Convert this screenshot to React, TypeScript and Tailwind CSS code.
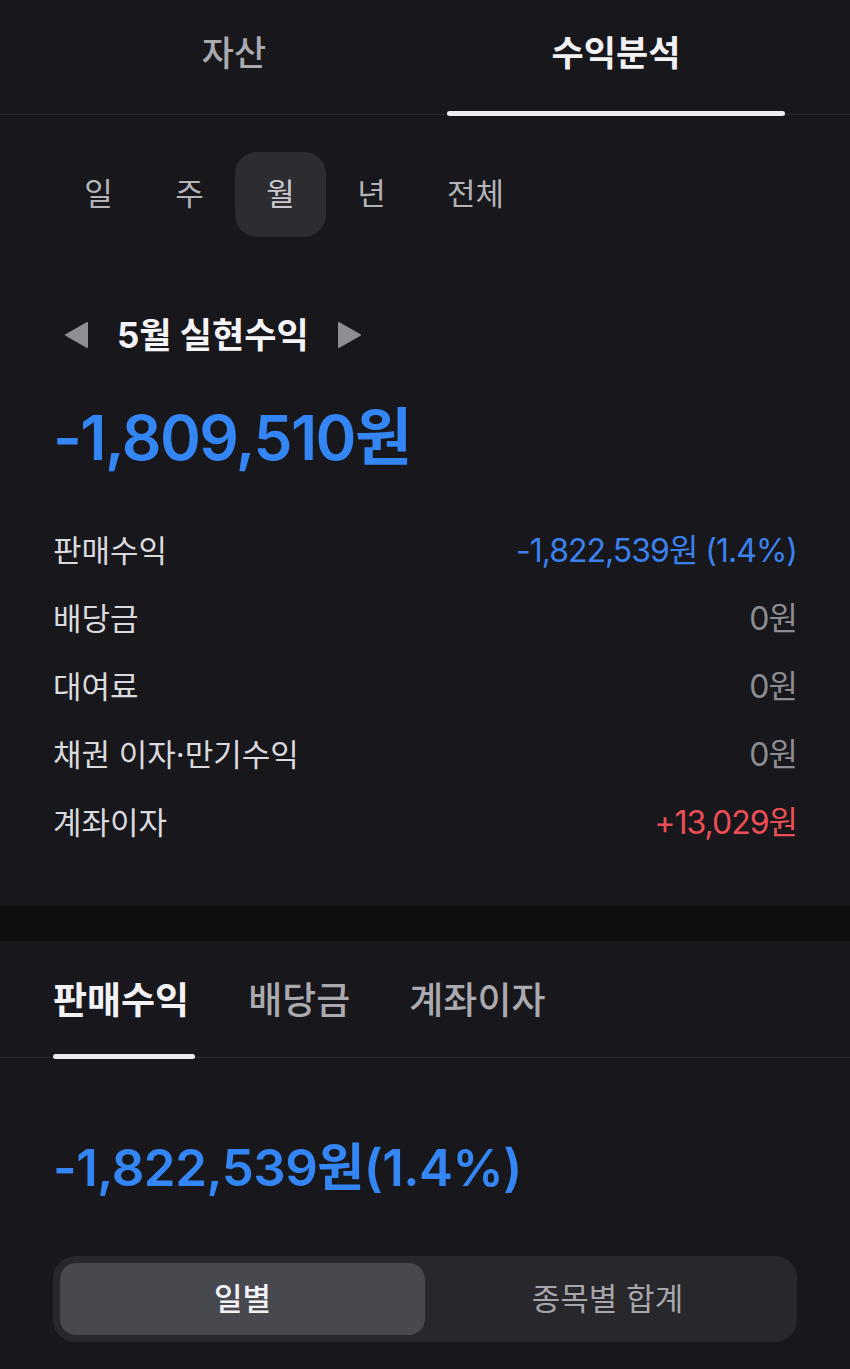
import React, { useState } from 'react';

const FONT = 'font-["Inter","Noto_Sans_CJK_KR",sans-serif]';

const rows = [
  { label: '판매수익', value: '-1,822,539원 (1.4%)', tone: 'text-[#3b82ee]' },
  { label: '배당금', value: '0원', tone: 'text-[#8c8c92]' },
  { label: '대여료', value: '0원', tone: 'text-[#8c8c92]' },
  { label: '채권 이자·만기수익', value: '0원', tone: 'text-[#8c8c92]' },
  { label: '계좌이자', value: '+13,029원', tone: 'text-[#ec4f55]' },
];

export default function App() {
  const [period, setPeriod] = useState('월');
  const [mode, setMode] = useState('일별');

  return (
    <div className={`min-h-screen w-[850px] bg-[#17171c] ${FONT}`}>
      {/* Top tabs */}
      <div className="flex gap-[46px] px-[66px] h-[115px] border-b border-[#2a2a2f]">
        {['자산', '수익분석'].map((t) => {
          const active = t === '수익분석';
          return (
            <div key={t} className="relative flex-1 flex justify-center pt-[29px]">
              <span
                className={`text-[35px] leading-[48px] ${
                  active ? 'font-bold text-[#f2f2f5]' : 'font-medium text-[#a9a9ae]'
                }`}
              >
                {t}
              </span>
              {active && (
                <div className="absolute left-[-1px] right-[-1px] bottom-[-2px] h-[5px] rounded-full bg-[#ececf0]" />
              )}
            </div>
          );
        })}
      </div>

      {/* Period selector */}
      <div className="flex px-[53px] mt-[37px]">
        {['일', '주', '월', '년', '전체'].map((p) => (
          <button
            key={p}
            onClick={() => setPeriod(p)}
            className={`h-[85px] min-w-[91px] px-[30px] rounded-[22px] text-[31px] ${
              period === p ? 'bg-[#2c2c31] text-[#c9c9ce]' : 'text-[#b3b3b8]'
            }`}
          >
            {p}
          </button>
        ))}
      </div>

      {/* Realized profit */}
      <div className="px-[53px]">
        <div className="flex items-center mt-[76px] h-[44px]">
          <svg width="26" height="28" viewBox="0 0 26 28" className="ml-[10px]">
            <path d="M24 2 L3 14 L24 26 Z" fill="#8e8e93" strokeLinejoin="round" stroke="#8e8e93" strokeWidth="2" />
          </svg>
          <span className="ml-[28px] text-[35px] font-bold text-[#f4f4f6]">5월 실현수익</span>
          <svg width="26" height="28" viewBox="0 0 26 28" className="ml-[28px]">
            <path d="M2 2 L23 14 L2 26 Z" fill="#8e8e93" strokeLinejoin="round" stroke="#8e8e93" strokeWidth="2" />
          </svg>
        </div>

        <div className="mt-[45px] text-[62px] leading-[72px] font-semibold text-[#3586f5] tracking-[-1.5px]">
          -1,809,510원
        </div>

        <div className="mt-[43px] pb-[49px]">
          {rows.map((r) => (
            <div key={r.label} className="flex items-center justify-between h-[68px]">
              <span className="text-[31px] text-[#dadade]">{r.label}</span>
              <span className={`text-[32px] tracking-[-1px] ${r.tone}`}>{r.value}</span>
            </div>
          ))}
        </div>
      </div>

      {/* Divider band */}
      <div className="h-[35px] bg-[#0f0f12]" />

      {/* Sub tabs */}
      <div className="flex gap-[59px] px-[53px] h-[117px] border-b border-[#2a2a2f]">
        {['판매수익', '배당금', '계좌이자'].map((t) => {
          const active = t === '판매수익';
          return (
            <div key={t} className="relative pt-[35px]">
              <span
                className={`text-[37px] leading-[50px] ${
                  active ? 'font-bold text-[#f2f2f5]' : 'font-medium text-[#a9a9ae]'
                }`}
              >
                {t}
              </span>
              {active && (
                <div className="absolute left-0 right-[-6px] bottom-[-2px] h-[5px] rounded-full bg-[#ececf0]" />
              )}
            </div>
          );
        })}
      </div>

      <div className="px-[53px]">
        <div className="mt-[80px] text-[51px] leading-[60px] font-semibold text-[#3586f5] tracking-[-0.5px]">
          -1,822,539원(1.4%)
        </div>

        <div className="mt-[58px] flex h-[86px] p-[7px] rounded-[22px] bg-[#27272c]">
          {['일별', '종목별 합계'].map((m) => (
            <button
              key={m}
              onClick={() => setMode(m)}
              className={`flex-1 rounded-[16px] text-[31px] ${
                mode === m ? 'bg-[#48484f] text-[#f2f2f5] font-medium' : 'text-[#a6a6ab]'
              }`}
            >
              {m}
            </button>
          ))}
        </div>
      </div>
    </div>
  );
}
